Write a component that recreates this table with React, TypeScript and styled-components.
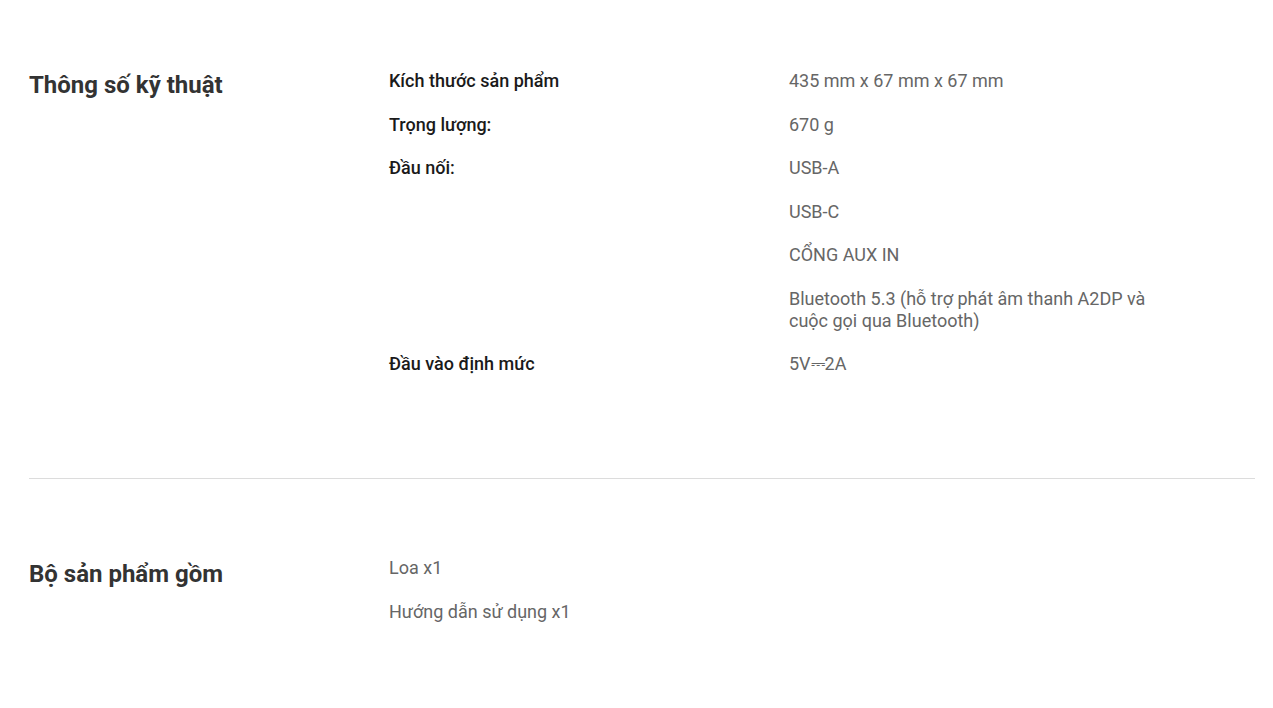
import styled, { createGlobalStyle } from "styled-components";

const GlobalStyle = createGlobalStyle`
  body {
    margin: 0;
    background: #fff;
    font-family: Roboto, "Noto Sans", Arial, sans-serif;
  }
`;

const Page = styled.div`
  padding: 0 18px 0 29px;
`;

const Section = styled.section<{ $top: number; $bottom: number; $divider?: boolean }>`
  display: grid;
  grid-template-columns: 360px 1fr;
  padding: ${(p) => p.$top}px 0 ${(p) => p.$bottom}px;
  border-bottom: ${(p) => (p.$divider ? "1px solid #dcdcdc" : "none")};
`;

const Title = styled.h2<{ $offset?: number }>`
  margin: ${(p) => p.$offset ?? 0}px 0 0;
  font-size: 24px;
  line-height: 30px;
  font-weight: 700;
  color: #333;
`;

const Rows = styled.div`
  display: flex;
  flex-direction: column;
  gap: 21.5px;
`;

const Row = styled.div`
  display: grid;
  grid-template-columns: 400px 370px;
`;

const Label = styled.div`
  font-size: 18px;
  line-height: 22px;
  font-weight: 500;
  color: #1a1a1a;
`;

const Values = styled.div`
  display: flex;
  flex-direction: column;
  gap: 21.5px;
`;

const Value = styled.div`
  font-size: 18px;
  line-height: 22px;
  color: #666;
`;

interface Spec {
  label: string;
  values: string[];
}

const specs: Spec[] = [
  { label: "Kích thước sản phẩm", values: ["435 mm x 67 mm x 67 mm"] },
  { label: "Trọng lượng:", values: ["670 g"] },
  {
    label: "Đầu nối:",
    values: [
      "USB-A",
      "USB-C",
      "CỔNG AUX IN",
      "Bluetooth 5.3 (hỗ trợ phát âm thanh A2DP và cuộc gọi qua Bluetooth)",
    ],
  },
  { label: "Đầu vào định mức", values: ["5V⎓2A"] },
];

const box = ["Loa x1", "Hướng dẫn sử dụng x1"];

export default function App() {
  return (
    <Page>
      <GlobalStyle />
      <Section $top={70} $bottom={103} $divider>
        <Title>Thông số kỹ thuật</Title>
        <Rows>
          {specs.map((s) => (
            <Row key={s.label}>
              <Label>{s.label}</Label>
              <Values>
                {s.values.map((v) => (
                  <Value key={v}>{v}</Value>
                ))}
              </Values>
            </Row>
          ))}
        </Rows>
      </Section>
      <Section $top={78} $bottom={40}>
        <Title $offset={2}>Bộ sản phẩm gồm</Title>
        <Rows>
          {box.map((v) => (
            <Value key={v}>{v}</Value>
          ))}
        </Rows>
      </Section>
    </Page>
  );
}
